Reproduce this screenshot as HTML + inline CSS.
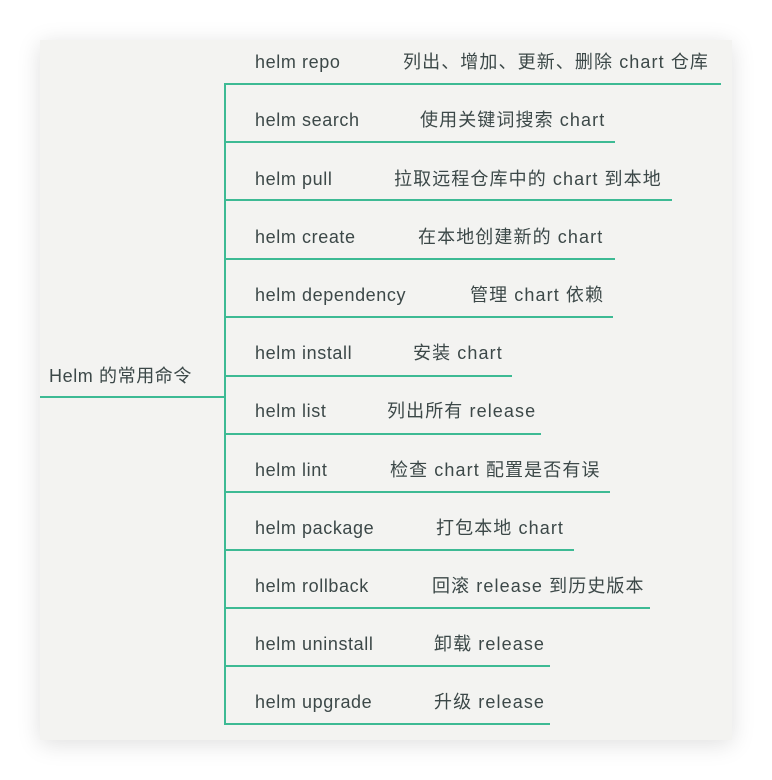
<!DOCTYPE html><html><head><meta charset="utf-8"><style>
body{margin:0;width:772px;height:780px;background:#fff;position:relative;overflow:hidden;font-family:"Liberation Sans","Noto Sans CJK SC",sans-serif;}
.p{position:absolute;left:40px;top:40px;width:692px;height:700px;background:#f3f3f1;box-shadow:0 4px 22px rgba(0,0,0,0.13);}
.l{position:absolute;background:#3dba94;height:2px;}
.v{position:absolute;background:#3dba94;width:2px;}
.t{position:absolute;font-size:18px;letter-spacing:0.6px;color:#3c4848;white-space:nowrap;line-height:20px;}
.d{letter-spacing:1.1px;}
</style></head><body><div class="p"></div>
<div class="l" style="left:40px;top:396px;width:186px"></div>
<div class="v" style="left:224px;top:83px;height:642px"></div>
<div class="t" style="left:49px;top:366px">Helm 的常用命令</div>
<div class="l" style="left:224px;top:83px;width:497px"></div><div class="t" style="left:255px;top:52px">helm repo</div><div class="t d" style="left:403px;top:52px">列出、增加、更新、删除 chart 仓库</div>
<div class="l" style="left:224px;top:141px;width:391px"></div><div class="t" style="left:255px;top:110px">helm search</div><div class="t d" style="left:420px;top:110px">使用关键词搜索 chart</div>
<div class="l" style="left:224px;top:199px;width:448px"></div><div class="t" style="left:255px;top:169px">helm pull</div><div class="t d" style="left:394px;top:169px">拉取远程仓库中的 chart 到本地</div>
<div class="l" style="left:224px;top:258px;width:391px"></div><div class="t" style="left:255px;top:227px">helm create</div><div class="t d" style="left:418px;top:227px">在本地创建新的 chart</div>
<div class="l" style="left:224px;top:316px;width:389px"></div><div class="t" style="left:255px;top:285px">helm dependency</div><div class="t d" style="left:470px;top:285px">管理 chart 依赖</div>
<div class="l" style="left:224px;top:375px;width:288px"></div><div class="t" style="left:255px;top:343px">helm install</div><div class="t d" style="left:413px;top:343px">安装 chart</div>
<div class="l" style="left:224px;top:433px;width:317px"></div><div class="t" style="left:255px;top:401px">helm list</div><div class="t d" style="left:387px;top:401px">列出所有 release</div>
<div class="l" style="left:224px;top:491px;width:386px"></div><div class="t" style="left:255px;top:460px">helm lint</div><div class="t d" style="left:390px;top:460px">检查 chart 配置是否有误</div>
<div class="l" style="left:224px;top:549px;width:350px"></div><div class="t" style="left:255px;top:518px">helm package</div><div class="t d" style="left:436px;top:518px">打包本地 chart</div>
<div class="l" style="left:224px;top:607px;width:426px"></div><div class="t" style="left:255px;top:576px">helm rollback</div><div class="t d" style="left:432px;top:576px">回滚 release 到历史版本</div>
<div class="l" style="left:224px;top:665px;width:326px"></div><div class="t" style="left:255px;top:634px">helm uninstall</div><div class="t d" style="left:434px;top:634px">卸载 release</div>
<div class="l" style="left:224px;top:723px;width:326px"></div><div class="t" style="left:255px;top:692px">helm upgrade</div><div class="t d" style="left:434px;top:692px">升级 release</div>
</body></html>
